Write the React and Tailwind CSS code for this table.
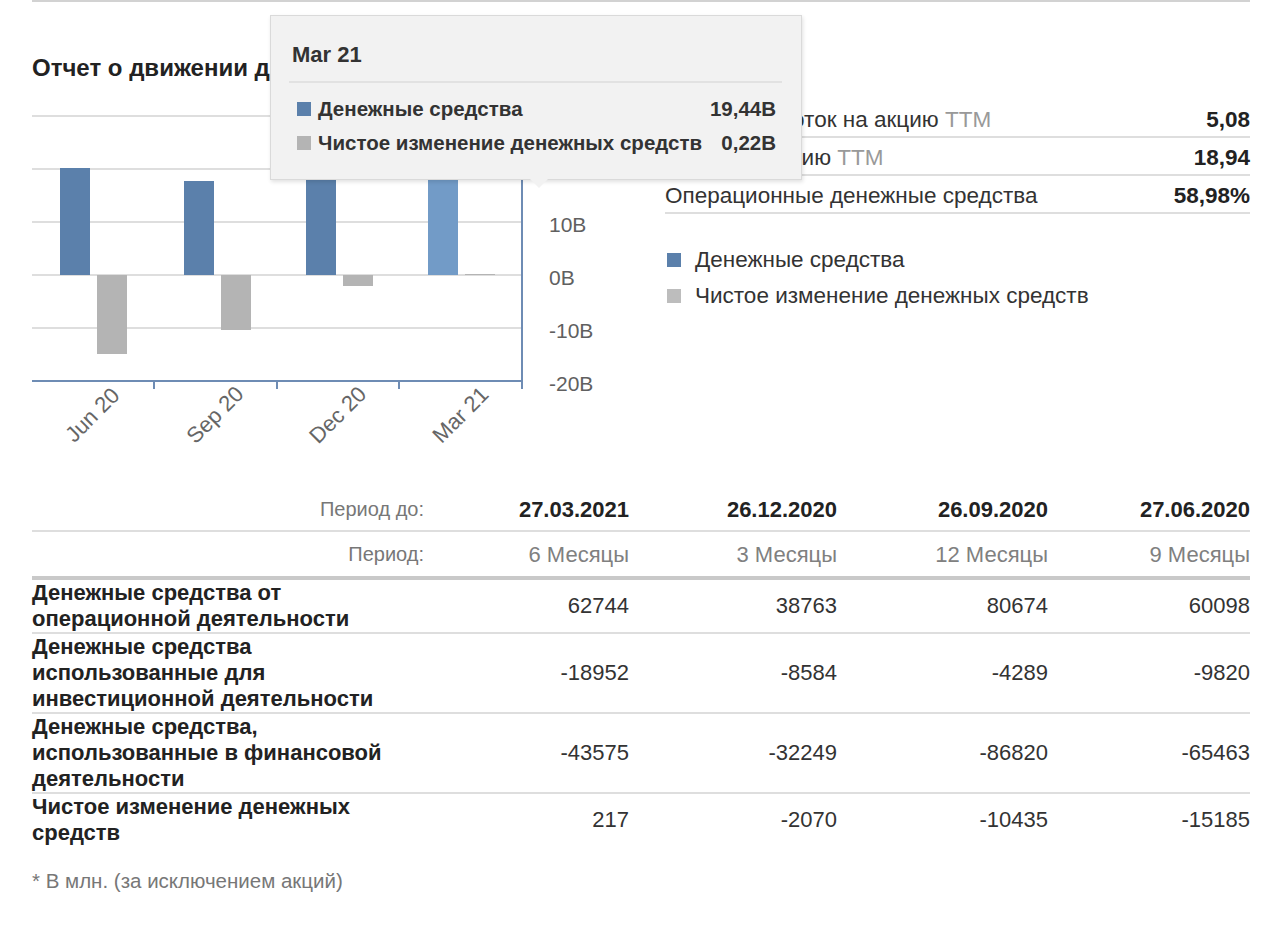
import React from 'react';

const font = { fontFamily: '"Liberation Sans", Arial, sans-serif' };

const stats = [
  { label: 'Денежный поток на акцию', ttm: true, value: '5,08' },
  { label: 'Доход на акцию', ttm: true, value: '18,94' },
  { label: 'Операционные денежные средства', ttm: false, value: '58,98%' },
];

const periods = [
  { date: '27.03.2021', len: '6 Месяцы' },
  { date: '26.12.2020', len: '3 Месяцы' },
  { date: '26.09.2020', len: '12 Месяцы' },
  { date: '27.06.2020', len: '9 Месяцы' },
];

const rows = [
  { label: 'Денежные средства от операционной деятельности', vals: ['62744', '38763', '80674', '60098'] },
  { label: 'Денежные средства использованные для инвестиционной деятельности', vals: ['-18952', '-8584', '-4289', '-9820'] },
  { label: 'Денежные средства, использованные в финансовой деятельности', vals: ['-43575', '-32249', '-86820', '-65463'] },
  { label: 'Чистое изменение денежных средств', vals: ['217', '-2070', '-10435', '-15185'] },
];

// chart geometry (svg coords)
const zero = 175;
const step = 53;
const grid = [30, 20, 10, 0, -10, -20];
const bars = [
  { x: 28, cash: 107, net: -79, label: 'Jun 20' },
  { x: 152, cash: 94, net: -55, label: 'Sep 20' },
  { x: 274, cash: 101, net: -11, label: 'Dec 20' },
  { x: 396, cash: 103, net: 1, label: 'Mar 21', active: true },
];

function Chart() {
  return (
    <svg width="608" height="370" className="block mt-[15px]" style={font}>
      {grid.map((v) => {
        const y = zero - (v / 10) * step;
        return (
          <g key={v}>
            {v > -20 && <line x1="0" x2="490" y1={y} y2={y} stroke="#dedede" strokeWidth="2" />}
            <text x="517" y={y + 4} fontSize="21" fill="#606060" dominantBaseline="middle">
              {v}B
            </text>
          </g>
        );
      })}
      {bars.map((b, i) => (
        <g key={b.label}>
          <rect x={b.x} y={zero - b.cash} width="30" height={b.cash} fill={b.active ? '#729bc7' : '#5b80ab'} />
          <rect
            x={b.x + 37}
            y={b.net > 0 ? zero - b.net : zero}
            width="30"
            height={Math.abs(b.net)}
            fill="#b4b4b4"
          />
          <text
            x={61.4 + i * 122.75}
            y="316"
            fontSize="22"
            fill="#666"
            textAnchor="middle"
            dominantBaseline="middle"
            transform={`rotate(-45 ${61.4 + i * 122.75} 316)`}
          >
            {b.label}
          </text>
        </g>
      ))}
      <line x1="0" x2="491" y1="281" y2="281" stroke="#6e8cb4" strokeWidth="2" />
      <line x1="490" x2="490" y1="15" y2="281" stroke="#6e8cb4" strokeWidth="2" />
      {[122, 245, 367, 490].map((x) => (
        <line key={x} x1={x} x2={x} y1="281" y2="289" stroke="#6e8cb4" strokeWidth="2" />
      ))}
    </svg>
  );
}

function Tooltip() {
  return (
    <div className="absolute left-[270px] top-[15px] w-[532px] h-[165px] bg-[#f2f2f2] border border-[#dadada] shadow-[1px_2px_4px_rgba(0,0,0,0.12)]">
      <div className="pl-[21px] pt-[24px] text-[22px] leading-[30px] font-bold text-[#333]">Mar 21</div>
      <div className="ml-[18px] mr-[19px] mt-[11px] border-t-2 border-[#e2e2e2]" />
      <div className="pl-[26px] pr-[25px] pt-[9px] text-[20.5px] font-bold text-[#333]">
        <div className="flex items-center h-[34px]">
          <span className="w-[14px] h-[14px] bg-[#5b80ab] mr-[7px]" />
          <span className="flex-1">Денежные средства</span>
          <span>19,44B</span>
        </div>
        <div className="flex items-center h-[34px]">
          <span className="w-[14px] h-[14px] bg-[#b4b4b4] mr-[7px]" />
          <span className="flex-1">Чистое изменение денежных средств</span>
          <span>0,22B</span>
        </div>
      </div>
      <div className="absolute left-[259px] -bottom-[9px] w-0 h-0 border-l-[9px] border-r-[9px] border-t-[9px] border-l-transparent border-r-transparent border-t-[#f2f2f2]" />
    </div>
  );
}

export default function App() {
  return (
    <div className="relative bg-white min-h-[934px] pl-8 pr-[30px] text-[#333]" style={font}>
      <div className="h-[2px] bg-[#d2d2d2]" />

      <div className="grid grid-cols-[608px_1fr] gap-[25px]">
        <div className="pt-[49px]">
          <h2 className="text-[24px] leading-[34px] font-bold text-[#222] whitespace-nowrap">
            Отчет о движении денежных средств
          </h2>
          <Chart />
        </div>

        <div className="pt-[98px] text-[22.5px]">
          {stats.map((s) => (
            <div key={s.label} className="flex items-center h-[38px] pt-1 border-b-2 border-[#dedede]">
              <span className="flex-1">
                {s.label}
                {s.ttm && <span className="text-[#999]"> TTM</span>}
              </span>
              <span className="font-bold text-[#222]">{s.value}</span>
            </div>
          ))}
          <div className="mt-[28px]">
            <div className="flex items-center h-[36px]">
              <span className="w-[14px] h-[14px] bg-[#5b80ab] ml-[2px] mr-[14px]" />
              <span>Денежные средства</span>
            </div>
            <div className="flex items-center h-[36px]">
              <span className="w-[14px] h-[14px] bg-[#bdbdbd] ml-[2px] mr-[14px]" />
              <span>Чистое изменение денежных средств</span>
            </div>
          </div>
        </div>
      </div>

      <div className="mt-[18px] text-[22px]">
        <div className="grid grid-cols-[392px_205px_208px_211px_202px] h-[44px] items-center border-b-2 border-[#dedede]">
          <div className="text-right text-[20px] text-[#777]">Период до:</div>
          {periods.map((p) => (
            <div key={p.date} className="text-right font-bold text-[#222]">{p.date}</div>
          ))}
        </div>
        <div className="grid grid-cols-[392px_205px_208px_211px_202px] h-[48px] items-center border-b-4 border-[#c9c9c9]">
          <div className="text-right text-[20px] text-[#777]">Период:</div>
          {periods.map((p) => (
            <div key={p.len} className="text-right text-[#808080]">{p.len}</div>
          ))}
        </div>
        {rows.map((r, i) => (
          <div
            key={r.label}
            className={`grid grid-cols-[392px_205px_208px_211px_202px] items-center leading-[26px] ${
              i < rows.length - 1 ? 'border-b-2 border-[#dedede]' : ''
            }`}
          >
            <div className="pr-[22px] font-bold text-[#222]">{r.label}</div>
            {r.vals.map((v, j) => (
              <div key={j} className="text-right text-[#333]">{v}</div>
            ))}
          </div>
        ))}
        <div className="mt-[22px] text-[20.5px] leading-[26px] text-[#777]">* В млн. (за исключением акций)</div>
      </div>

      <Tooltip />
    </div>
  );
}
